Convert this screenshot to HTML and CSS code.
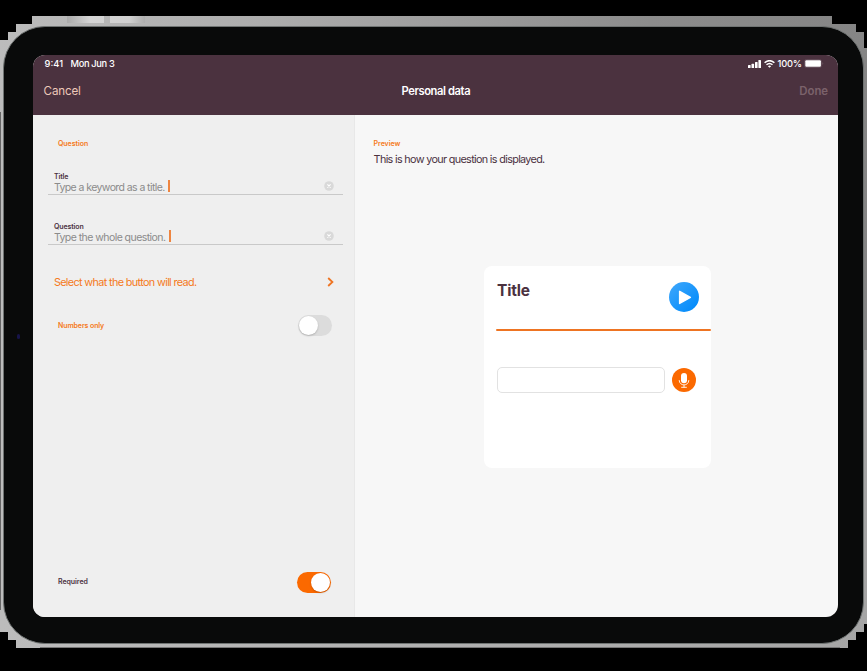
FILE: index.html
```html
<!DOCTYPE html>
<html lang="en">
<head>
<meta charset="utf-8">
<title>Personal data</title>
<link rel="stylesheet" href="styles.css">
</head>
<body>
<svg class="casing" viewBox="0 0 867 671" aria-hidden="true">
  <defs>
    <linearGradient id="metal"><stop offset="0" stop-color="#bcbcbc"/><stop offset=".3" stop-color="#adadad"/><stop offset=".75" stop-color="#8c8c8c"/><stop offset="1" stop-color="#858585"/></linearGradient>
    <linearGradient id="base"><stop offset="0" stop-color="#bcbcbc"/><stop offset="1" stop-color="#a5a5a5"/></linearGradient>
    <linearGradient id="key"><stop offset="0" stop-color="#aaa"/><stop offset=".3" stop-color="#d5d5d5"/><stop offset=".8" stop-color="#d0d0d0"/><stop offset="1" stop-color="#adadad"/></linearGradient>
  </defs>
  <path fill="url(#metal)" d="M32 16H832V24H856V32H864V48H867V350H0V40H8V32H16V24H32Z"/>
  <path fill="url(#base)" d="M0 350H867V624H864V632H856V640H848V648H16V640H8V632H0Z"/>
  <path fill="url(#key)" d="M67 16H104V23H67ZM110 16H145V23H110Z"/>
  <path fill="#666" d="M0 112H1V610H0Z"/>
  <path fill="#777" d="M40 647H840V648H40Z"/>
</svg>
<div class="device">
  <i class="camera"></i>
  <main class="screen">
    <header class="top">
      <div class="status">
        <span class="time">9:41</span><span class="date">Mon Jun 3</span>
        <svg class="signal" viewBox="0 0 13 8" fill="#fff"><rect y="5" width="2.6" height="3" rx=".6"/><rect x="3.5" y="3.8" width="2.6" height="4.2" rx=".6"/><rect x="7" y="2" width="2.6" height="6" rx=".6"/><rect x="10.4" width="2.6" height="8" rx=".6"/></svg>
        <svg class="wifi" viewBox="0 0 11 8" fill="none" stroke="#fff" stroke-width="1.5"><path d="M.6 2.8Q5.5-1.5 10.4 2.8M2.5 4.8Q5.5 2.2 8.5 4.8"/><path fill="#fff" stroke="none" d="M3.9 6.2Q5.5 5 7.1 6.2L5.5 7.8Z"/></svg>
        <span class="percent">100%</span>
        <svg class="battery" viewBox="0 0 20 9"><rect x=".5" y=".5" width="17" height="8" rx="2" fill="none" stroke="#6a5560" stroke-width=".7"/><rect x="1.3" y="1.3" width="15.6" height="6.4" rx="1" fill="#fff"/><path d="M18.5 3Q20 4.5 18.5 6Z" fill="#78636d"/></svg>
      </div>
      <nav class="nav"><span class="cancel">Cancel</span><h1>Personal data</h1><span class="done">Done</span></nav>
    </header>
    <div class="panes">
      <section class="form">
        <h2 class="label">Question</h2>
        <div class="field">
          <span class="name">Title</span>
          <div class="entry"><span class="hint hint-title">Type a keyword as a title.</span><i class="caret"></i><svg class="clear" viewBox="0 0 10 10"><circle cx="5" cy="5" r="4.8" fill="#d9d9d9"/><path d="M3.4 3.4l3.2 3.2M6.6 3.4L3.4 6.6" stroke="#fff" stroke-width="1.1"/></svg></div>
        </div>
        <div class="field">
          <span class="name">Question</span>
          <div class="entry"><span class="hint hint-question">Type the whole question.</span><i class="caret"></i><svg class="clear" viewBox="0 0 10 10"><circle cx="5" cy="5" r="4.8" fill="#d9d9d9"/><path d="M3.4 3.4l3.2 3.2M6.6 3.4L3.4 6.6" stroke="#fff" stroke-width="1.1"/></svg></div>
        </div>
        <div class="select"><span class="select-text">Select what the button will read.</span><svg class="chevron" viewBox="0 0 7 10"><path d="M1.2 1l4.2 4-4.2 4" fill="none" stroke="#ee7422" stroke-width="1.8"/></svg></div>
        <div class="option numbers"><span class="label numbers-text">Numbers only</span><span class="switch"></span></div>
        <div class="option required"><span class="label required-text">Required</span><span class="switch on"></span></div>
      </section>
      <section class="preview">
        <h2 class="label preview-text">Preview</h2>
        <p><span class="intro">This is how your question is displayed.</span></p>
        <article class="card">
          <div class="card-head"><h3>Title</h3>
            <svg class="play" viewBox="0 0 30 30"><defs><linearGradient id="blue" x1="0" y1="0" x2="1" y2="1"><stop offset=".1" stop-color="#3aa5fb"/><stop offset=".85" stop-color="#058cfb"/></linearGradient></defs><circle cx="15" cy="15" r="15" fill="url(#blue)"/><path d="M10.6 9.3v12.2L21.4 15.4Z" fill="#fff" stroke="#fff" stroke-width="1.4" stroke-linejoin="round"/></svg>
          </div>
          <div class="rule"></div>
          <div class="answer"><span class="box"></span>
            <svg class="mic" viewBox="0 0 24 24"><circle cx="12" cy="12" r="12" fill="#fb6900"/><rect x="9" y="5" width="6" height="10.2" rx="3" fill="#fff"/><path d="M7.3 12v.7a4.7 4.2 0 0 0 9.4 0V12M12 17v2.4M9.2 19.3h5.6" fill="none" stroke="#fff" stroke-width=".9"/></svg>
          </div>
        </article>
      </section>
    </div>
  </main>
</div>
</body>
</html>
```
FILE: styles.css
```css
* { box-sizing: border-box; }
body { margin: 0; width: 867px; height: 671px; padding: 26px 3px 27px; overflow: hidden; background: #000; font-family: Inter, "Liberation Sans", sans-serif; color: #4b323f; }
h1, h2, h3, p { margin: 0; }
svg { display: block; flex: none; }
.casing { position: absolute; left: 0; top: 0; width: 867px; height: 671px; }
.device { position: relative; height: 618px; padding: 27.6px 24.5px 26px 28.6px; border: 1px solid #707473; border-radius: 42px; background: #090a0a; }
.camera { position: absolute; left: 13px; top: 307px; width: 3px; height: 5px; border-radius: 2px; background: #17144a; }
.screen { width: 805px; height: 562px; border-radius: 12px; overflow: hidden; background: #f7f7f7; }
.top { height: 60.4px; background: #4b323f; color: #fff; }
.status { display: flex; align-items: center; height: 18px; padding: 0 13.5px 0 12px; font-size: 9.3px; font-weight: 500; white-space: nowrap; }
.time { width: 26px; }
.date { width: 45px; letter-spacing: -.35px; }
.signal { width: 13px; height: 8px; margin-left: auto; }
.wifi { width: 11px; height: 8px; margin: 0 2.5px 0 3.5px; }
.percent { width: 26.5px; letter-spacing: -.2px; }
.battery { width: 20px; height: 9px; }
.nav { display: grid; grid-template-columns: 1fr auto 1fr; align-items: center; height: 37px; padding: 0 9.5px 0 11px; }
.cancel { font-size: 11.6px; letter-spacing: -.15px; color: #edc8b9; }
h1 { font-size: 11.2px; font-weight: 600; line-height: 14px; letter-spacing: -.4px; }
.done { justify-self: end; font-size: 11.4px; font-weight: 600; color: #7b626b; }
.panes { display: flex; height: 501.6px; }
.form { display: flex; flex-direction: column; width: 322.5px; padding: 23px 11.5px 23.5px 15px; background: #efefef; border-right: 1px solid #e8e8e8; }
.label { font-size: 7px; line-height: 11px; height: 10px; font-weight: 600; letter-spacing: -.05px; color: #f57920; }
.form > h2 { margin-left: 10.4px; }
.field { height: 24px; margin-top: 23px; border-bottom: 1px solid #c9c9c9; padding-left: 6.3px; }
.field + .field { margin-top: 26px; }
.name { display: block; height: 10px; line-height: 11px; font-size: 7px; font-weight: 600; letter-spacing: -.1px; }
.entry { display: flex; align-items: center; height: 14px; font-size: 10.5px; color: #8b8b8b; white-space: nowrap; }
.caret { width: 2px; height: 12px; margin: -3px 0 0 2.8px; background: #ee8540; }
.hint-title { letter-spacing: -.58px; }
.hint-question { letter-spacing: -.55px; }
.hint-question + .caret { margin-left: 3.6px; }
.clear { width: 10px; height: 10px; margin: -3px 8.5px 0 auto; }
.select { display: flex; justify-content: space-between; align-items: center; height: 16px; margin-top: 30px; padding: 0 8.5px 0 6.3px; font-size: 10.8px; color: #f57920; white-space: nowrap; }
.select-text { letter-spacing: -.63px; }
.chevron { width: 7px; height: 10px; margin-top: -1px; }
.option { display: flex; align-items: center; justify-content: space-between; height: 22px; padding: 0 11.5px 0 10.4px; }
.numbers { margin-top: 24px; padding-right: 10.5px; }
.numbers-text { letter-spacing: -.1px; margin-top: -2px; }
.required { margin-top: auto; }
.required-text { color: #4b323f; margin-top: -2px; }
.switch { display: flex; width: 34px; height: 21px; border-radius: 11px; padding: 1px; background: #dcdcdc; }
.switch::before { content: ""; width: 19px; height: 19px; border-radius: 50%; background: #fff; box-shadow: 0 1px 2px #0003; }
.on { justify-content: flex-end; background: #fb6900; }
.preview { flex: 1; padding: 23px 18.5px; }
.preview p { height: 18px; padding-top: 3px; font-size: 10.8px; line-height: 18px; white-space: nowrap; }
.intro { letter-spacing: -.66px; }
.card { width: 227px; height: 202.5px; margin: 100px 0 0 110px; padding: 0 0 0 12.4px; border-radius: 8px; background: #fff; }
.card-head { display: flex; justify-content: space-between; height: 63px; padding: 16px 11.4px 0 1px; }
h3 { font-size: 15.5px; line-height: 17px; font-weight: 650; letter-spacing: -.2px; }
.play { width: 30px; height: 30px; }
.rule { height: 2.5px; background: #ee7422; border-radius: 1px; }
.answer { display: flex; align-items: center; margin-top: 35.5px; padding-left: .8px; gap: 7px; }
.box { width: 168px; height: 26px; border: 1px solid #e2e2e2; border-radius: 5px; }
.mic { width: 24px; height: 24px; }
```
